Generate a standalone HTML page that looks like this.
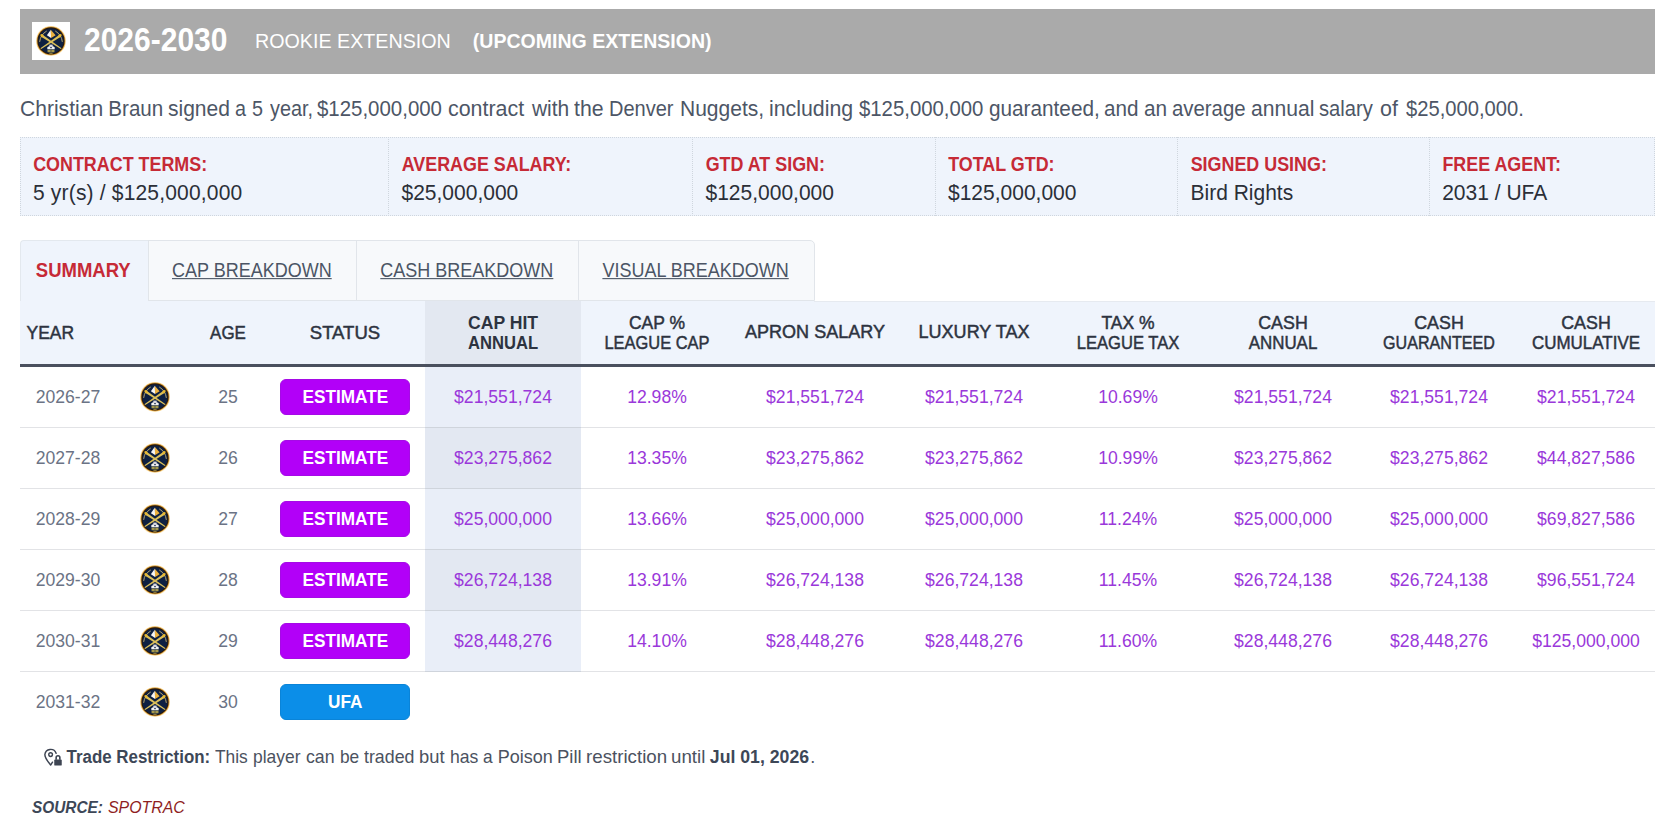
<!DOCTYPE html>
<html><head><meta charset="utf-8"><title>Contract</title>
<style>
*{box-sizing:border-box;margin:0;padding:0}
html,body{width:1663px;height:830px;overflow:hidden;background:#fff}
body{position:relative;font-family:"Liberation Sans", sans-serif}
.a{position:absolute;white-space:nowrap}
</style></head>
<body>
<div class="a" style="left:20px;top:9px;width:1635px;height:65px;background:#aaaaaa"></div>
<div class="a" style="left:32px;top:22px;width:38px;height:38px;background:#fff"></div>
<svg viewBox="0 0 40 40" width="40" height="40" style="position:absolute;left:31px;top:21px">
<circle cx="20" cy="19.9" r="15.0" fill="#f7cf70" opacity="0.45"/>
<circle cx="20" cy="19.9" r="14.4" fill="#e0a035"/>
<circle cx="20" cy="19.9" r="13.6" fill="#2a1a0e"/>
<circle cx="20" cy="19.9" r="12.5" fill="#0e2042"/>
<path d="M8.7 20.5 Q9.4 13.8 15.4 10.2 M31.3 20.5 Q30.6 13.8 24.6 10.2" stroke="#c9b472" stroke-width="0.9" fill="none" stroke-linecap="round"/>
<path d="M9.4 27.2 L10.2 28.0 L30.2 15.6 L28.8 13.6 Z" fill="#dcc05a"/>
<path d="M30.6 27.2 L29.8 28.0 L9.8 15.6 L11.2 13.6 Z" fill="#dcc05a"/>
<ellipse cx="11" cy="14.6" rx="1.8" ry="1.3" transform="rotate(33 11 14.6)" fill="#e8b830"/>
<ellipse cx="29" cy="14.6" rx="1.8" ry="1.3" transform="rotate(-33 29 14.6)" fill="#e8b830"/>
<path d="M19.8 8.7 L15.9 14.2 L20.1 17.1 Z" fill="#f6f6f6"/>
<path d="M19.8 8.7 L24.6 14.2 L20.1 17.1 Z" fill="#eab040"/>
<path d="M16.3 28.2 L16.3 26.2 L18 25.2 L22 25.2 L23.7 26.2 L23.7 28.2 Z" fill="#f2f2f2"/>
<rect x="18.3" y="23.6" width="3.4" height="2.2" fill="#d8d8e0"/>
<rect x="19.2" y="26.1" width="1.6" height="1.1" fill="#0e2042"/>
<rect x="16.6" y="28.8" width="6.8" height="2.4" fill="#d8c050"/>
<path d="M20 28.8 V31.2 M16.6 30 H23.4" stroke="#0e2042" stroke-width="0.5"/>
<rect x="18.4" y="31.8" width="3.2" height="0.9" fill="#b8a040"/>
</svg>
<div class="a" style="left:84.00px;top:22.81px;font-size:30px;line-height:36px;color:#fff;font-weight:700;font-style:normal;transform:scale(1.0,1.12);transform-origin:0 28.39px;">2026-2030</div>
<div class="a" style="left:255.00px;top:29.07px;font-size:19.7px;line-height:24px;color:#fff;font-weight:400;font-style:normal;transform:scale(1.0,1.07);transform-origin:0 18.83px;">ROOKIE EXTENSION</div>
<div class="a" style="left:472.80px;top:29.63px;font-size:19.55px;line-height:23px;color:#fff;font-weight:700;font-style:normal;transform:scale(1.0,1.05);transform-origin:0 18.27px;">(UPCOMING EXTENSION)</div>
<div class="a" style="left:20.28px;top:95.76px;font-size:20.6px;line-height:25px;color:#4d5666;font-weight:400;font-style:normal;transform:scale(1.0228,1.07);transform-origin:0 19.64px;">Christian</div>
<div class="a" style="left:108.30px;top:95.76px;font-size:20.6px;line-height:25px;color:#4d5666;font-weight:400;font-style:normal;transform:scale(1.0,1.07);transform-origin:0 19.64px;">Braun</div>
<div class="a" style="left:168.08px;top:95.76px;font-size:20.6px;line-height:25px;color:#4d5666;font-weight:400;font-style:normal;transform:scale(1.0203,1.07);transform-origin:0 19.64px;">signed</div>
<div class="a" style="left:234.86px;top:95.76px;font-size:20.6px;line-height:25px;color:#4d5666;font-weight:400;font-style:normal;transform:scale(0.96,1.07);transform-origin:0 19.64px;">a</div>
<div class="a" style="left:252.19px;top:95.76px;font-size:20.6px;line-height:25px;color:#4d5666;font-weight:400;font-style:normal;transform:scale(0.96,1.07);transform-origin:0 19.64px;">5</div>
<div class="a" style="left:269.70px;top:95.76px;font-size:20.6px;line-height:25px;color:#4d5666;font-weight:400;font-style:normal;transform:scale(0.9628,1.07);transform-origin:0 19.64px;">year,</div>
<div class="a" style="left:316.90px;top:95.76px;font-size:20.6px;line-height:25px;color:#4d5666;font-weight:400;font-style:normal;transform:scale(0.992,1.07);transform-origin:0 19.64px;">$125,000,000</div>
<div class="a" style="left:448.42px;top:95.76px;font-size:20.6px;line-height:25px;color:#4d5666;font-weight:400;font-style:normal;transform:scale(1.04,1.07);transform-origin:0 19.64px;">contract</div>
<div class="a" style="left:531.90px;top:95.76px;font-size:20.6px;line-height:25px;color:#4d5666;font-weight:400;font-style:normal;transform:scale(1.0167,1.07);transform-origin:0 19.64px;">with</div>
<div class="a" style="left:574.30px;top:95.76px;font-size:20.6px;line-height:25px;color:#4d5666;font-weight:400;font-style:normal;transform:scale(1.0321,1.07);transform-origin:0 19.64px;">the</div>
<div class="a" style="left:609.46px;top:95.76px;font-size:20.6px;line-height:25px;color:#4d5666;font-weight:400;font-style:normal;transform:scale(0.9719,1.07);transform-origin:0 19.64px;">Denver</div>
<div class="a" style="left:679.66px;top:95.76px;font-size:20.6px;line-height:25px;color:#4d5666;font-weight:400;font-style:normal;transform:scale(1.0203,1.07);transform-origin:0 19.64px;">Nuggets,</div>
<div class="a" style="left:768.56px;top:95.76px;font-size:20.6px;line-height:25px;color:#4d5666;font-weight:400;font-style:normal;transform:scale(1.0354,1.07);transform-origin:0 19.64px;">including</div>
<div class="a" style="left:859.10px;top:95.76px;font-size:20.6px;line-height:25px;color:#4d5666;font-weight:400;font-style:normal;transform:scale(0.9872,1.07);transform-origin:0 19.64px;">$125,000,000</div>
<div class="a" style="left:989.19px;top:95.76px;font-size:20.6px;line-height:25px;color:#4d5666;font-weight:400;font-style:normal;transform:scale(1.0075,1.07);transform-origin:0 19.64px;">guaranteed,</div>
<div class="a" style="left:1104.00px;top:95.76px;font-size:20.6px;line-height:25px;color:#4d5666;font-weight:400;font-style:normal;transform:scale(1.0031,1.07);transform-origin:0 19.64px;">and</div>
<div class="a" style="left:1143.79px;top:95.76px;font-size:20.6px;line-height:25px;color:#4d5666;font-weight:400;font-style:normal;transform:scale(1.0095,1.07);transform-origin:0 19.64px;">an</div>
<div class="a" style="left:1171.71px;top:95.76px;font-size:20.6px;line-height:25px;color:#4d5666;font-weight:400;font-style:normal;transform:scale(0.989,1.07);transform-origin:0 19.64px;">average</div>
<div class="a" style="left:1250.57px;top:95.76px;font-size:20.6px;line-height:25px;color:#4d5666;font-weight:400;font-style:normal;transform:scale(1.0267,1.07);transform-origin:0 19.64px;">annual</div>
<div class="a" style="left:1319.02px;top:95.76px;font-size:20.6px;line-height:25px;color:#4d5666;font-weight:400;font-style:normal;transform:scale(0.9796,1.07);transform-origin:0 19.64px;">salary</div>
<div class="a" style="left:1380.34px;top:95.76px;font-size:20.6px;line-height:25px;color:#4d5666;font-weight:400;font-style:normal;transform:scale(1.04,1.07);transform-origin:0 19.64px;">of</div>
<div class="a" style="left:1405.70px;top:95.76px;font-size:20.6px;line-height:25px;color:#4d5666;font-weight:400;font-style:normal;transform:scale(0.9798,1.07);transform-origin:0 19.64px;">$25,000,000.</div>
<div class="a" style="left:20px;top:137px;width:1635px;height:79px;background:#eff4fc;border:1px dotted #cfd6de"></div>
<div class="a" style="left:33.20px;top:154.50px;font-size:17.9px;line-height:21px;color:#c62a36;font-weight:700;font-style:normal;transform:scale(1.0,1.08);transform-origin:0 16.70px;">CONTRACT TERMS:</div>
<div class="a" style="left:33.00px;top:180.02px;font-size:21px;line-height:25px;color:#2b2f38;font-weight:400;font-style:normal;transform:scale(1.0,1.07);transform-origin:0 19.78px;letter-spacing:0.18px;">5 yr(s) / $125,000,000</div>
<div class="a" style="left:388.0px;top:137px;width:1px;height:79px;border-left:1px dotted #cfd6de"></div>
<div class="a" style="left:401.70px;top:154.50px;font-size:17.9px;line-height:21px;color:#c62a36;font-weight:700;font-style:normal;transform:scale(1.0,1.08);transform-origin:0 16.70px;">AVERAGE SALARY:</div>
<div class="a" style="left:401.50px;top:180.02px;font-size:21px;line-height:25px;color:#2b2f38;font-weight:400;font-style:normal;transform:scale(1.0,1.07);transform-origin:0 19.78px;">$25,000,000</div>
<div class="a" style="left:692.0px;top:137px;width:1px;height:79px;border-left:1px dotted #cfd6de"></div>
<div class="a" style="left:705.70px;top:154.50px;font-size:17.9px;line-height:21px;color:#c62a36;font-weight:700;font-style:normal;transform:scale(1.0,1.08);transform-origin:0 16.70px;">GTD AT SIGN:</div>
<div class="a" style="left:705.50px;top:180.02px;font-size:21px;line-height:25px;color:#2b2f38;font-weight:400;font-style:normal;transform:scale(1.0,1.07);transform-origin:0 19.78px;">$125,000,000</div>
<div class="a" style="left:934.5px;top:137px;width:1px;height:79px;border-left:1px dotted #cfd6de"></div>
<div class="a" style="left:948.20px;top:154.50px;font-size:17.9px;line-height:21px;color:#c62a36;font-weight:700;font-style:normal;transform:scale(1.0,1.08);transform-origin:0 16.70px;">TOTAL GTD:</div>
<div class="a" style="left:948.00px;top:180.02px;font-size:21px;line-height:25px;color:#2b2f38;font-weight:400;font-style:normal;transform:scale(1.0,1.07);transform-origin:0 19.78px;">$125,000,000</div>
<div class="a" style="left:1177.0px;top:137px;width:1px;height:79px;border-left:1px dotted #cfd6de"></div>
<div class="a" style="left:1190.70px;top:154.50px;font-size:17.9px;line-height:21px;color:#c62a36;font-weight:700;font-style:normal;transform:scale(1.0,1.08);transform-origin:0 16.70px;">SIGNED USING:</div>
<div class="a" style="left:1190.50px;top:180.02px;font-size:21px;line-height:25px;color:#2b2f38;font-weight:400;font-style:normal;transform:scale(1.0,1.07);transform-origin:0 19.78px;">Bird Rights</div>
<div class="a" style="left:1428.7px;top:137px;width:1px;height:79px;border-left:1px dotted #cfd6de"></div>
<div class="a" style="left:1442.40px;top:154.50px;font-size:17.9px;line-height:21px;color:#c62a36;font-weight:700;font-style:normal;transform:scale(1.0,1.08);transform-origin:0 16.70px;">FREE AGENT:</div>
<div class="a" style="left:1442.20px;top:180.02px;font-size:21px;line-height:25px;color:#2b2f38;font-weight:400;font-style:normal;transform:scale(1.0,1.07);transform-origin:0 19.78px;">2031 / UFA</div>
<div class="a" style="left:20px;top:240px;width:128px;height:62px;background:#eff4fc;border-top:1px solid #e3e8ee;border-left:1px solid #e3e8ee;border-top-left-radius:4px"></div>
<div class="a" style="left:147.5px;top:240px;width:209.3px;height:61px;background:#f7f9fb;border:1px solid #e1e5ea;"></div>
<div class="a" style="left:172.00px;top:259.56px;font-size:18px;line-height:22px;color:#4b5565;font-weight:400;font-style:normal;transform:scale(1.0,1.1);transform-origin:0 17.24px;text-decoration:underline;text-underline-offset:1px;text-decoration-thickness:1px">CAP BREAKDOWN</div>
<div class="a" style="left:355.8px;top:240px;width:223.1px;height:61px;background:#f7f9fb;border:1px solid #e1e5ea;"></div>
<div class="a" style="left:380.30px;top:259.56px;font-size:18px;line-height:22px;color:#4b5565;font-weight:400;font-style:normal;transform:scale(1.0,1.1);transform-origin:0 17.24px;text-decoration:underline;text-underline-offset:1px;text-decoration-thickness:1px">CASH BREAKDOWN</div>
<div class="a" style="left:577.9px;top:240px;width:237.4px;height:61px;background:#f7f9fb;border:1px solid #e1e5ea;border-top-right-radius:5px;"></div>
<div class="a" style="left:602.40px;top:259.56px;font-size:18px;line-height:22px;color:#4b5565;font-weight:400;font-style:normal;transform:scale(1.0,1.1);transform-origin:0 17.24px;text-decoration:underline;text-underline-offset:1px;text-decoration-thickness:1px">VISUAL BREAKDOWN</div>
<div class="a" style="left:35.80px;top:259.59px;font-size:18.5px;line-height:22px;color:#c62a36;font-weight:700;font-style:normal;transform:scale(1.0,1.05);transform-origin:0 17.41px;">SUMMARY</div>
<div class="a" style="left:20px;top:301px;width:1635px;height:63px;background:#eff4fc"></div>
<div class="a" style="left:814px;top:301px;width:841px;height:1px;background:#e6eaf0"></div>
<div class="a" style="left:425px;top:301px;width:156px;height:63px;background:#e3e8f1"></div>
<div class="a" style="left:20px;top:364px;width:1635px;height:3px;background:#4a505e"></div>
<div class="a" style="left:26.50px;top:322.64px;font-size:17.5px;line-height:21px;color:#2d3340;font-weight:400;font-style:normal;transform:scale(1.0,1.05);transform-origin:0 16.56px;-webkit-text-stroke:0.45px #2d3340">YEAR</div>
<div class="a" style="left:178.00px;top:322.64px;width:100px;text-align:center;font-size:17.5px;line-height:21px;color:#2d3340;font-weight:400;font-style:normal;transform:scale(0.97,1.05);transform-origin:50% 16.56px;-webkit-text-stroke:0.45px #2d3340">AGE</div>
<div class="a" style="left:275.40px;top:322.64px;width:140px;text-align:center;font-size:17.5px;line-height:21px;color:#2d3340;font-weight:400;font-style:normal;transform:scale(1.06,1.05);transform-origin:50% 16.56px;-webkit-text-stroke:0.45px #2d3340">STATUS</div>
<div class="a" style="left:418.00px;top:314.05px;width:170px;text-align:center;font-size:16.6px;line-height:20px;color:#2d3340;font-weight:700;font-style:normal;transform:scale(1.06,1.1);transform-origin:50% 15.75px;">CAP HIT</div>
<div class="a" style="left:418.00px;top:333.95px;width:170px;text-align:center;font-size:16.6px;line-height:20px;color:#2d3340;font-weight:700;font-style:normal;transform:scale(1.0,1.1);transform-origin:50% 15.75px;">ANNUAL</div>
<div class="a" style="left:572.00px;top:313.24px;width:170px;text-align:center;font-size:17.5px;line-height:21px;color:#2d3340;font-weight:400;font-style:normal;transform:scale(1.0,1.05);transform-origin:50% 16.56px;-webkit-text-stroke:0.45px #2d3340">CAP %</div>
<div class="a" style="left:572.00px;top:333.14px;width:170px;text-align:center;font-size:17.5px;line-height:21px;color:#2d3340;font-weight:400;font-style:normal;transform:scale(0.94,1.05);transform-origin:50% 16.56px;-webkit-text-stroke:0.45px #2d3340">LEAGUE CAP</div>
<div class="a" style="left:730.00px;top:322.34px;width:170px;text-align:center;font-size:17.5px;line-height:21px;color:#2d3340;font-weight:400;font-style:normal;transform:scale(1.03,1.05);transform-origin:50% 16.56px;-webkit-text-stroke:0.45px #2d3340">APRON SALARY</div>
<div class="a" style="left:889.00px;top:322.34px;width:170px;text-align:center;font-size:17.5px;line-height:21px;color:#2d3340;font-weight:400;font-style:normal;transform:scale(1.03,1.05);transform-origin:50% 16.56px;-webkit-text-stroke:0.45px #2d3340">LUXURY TAX</div>
<div class="a" style="left:1043.00px;top:313.24px;width:170px;text-align:center;font-size:17.5px;line-height:21px;color:#2d3340;font-weight:400;font-style:normal;transform:scale(1.0,1.05);transform-origin:50% 16.56px;-webkit-text-stroke:0.45px #2d3340">TAX %</div>
<div class="a" style="left:1043.00px;top:333.14px;width:170px;text-align:center;font-size:17.5px;line-height:21px;color:#2d3340;font-weight:400;font-style:normal;transform:scale(0.947,1.05);transform-origin:50% 16.56px;-webkit-text-stroke:0.45px #2d3340">LEAGUE TAX</div>
<div class="a" style="left:1198.00px;top:313.24px;width:170px;text-align:center;font-size:17.5px;line-height:21px;color:#2d3340;font-weight:400;font-style:normal;transform:scale(1.02,1.05);transform-origin:50% 16.56px;-webkit-text-stroke:0.45px #2d3340">CASH</div>
<div class="a" style="left:1198.00px;top:333.14px;width:170px;text-align:center;font-size:17.5px;line-height:21px;color:#2d3340;font-weight:400;font-style:normal;transform:scale(0.967,1.05);transform-origin:50% 16.56px;-webkit-text-stroke:0.45px #2d3340">ANNUAL</div>
<div class="a" style="left:1354.00px;top:313.24px;width:170px;text-align:center;font-size:17.5px;line-height:21px;color:#2d3340;font-weight:400;font-style:normal;transform:scale(1.02,1.05);transform-origin:50% 16.56px;-webkit-text-stroke:0.45px #2d3340">CASH</div>
<div class="a" style="left:1354.00px;top:333.14px;width:170px;text-align:center;font-size:17.5px;line-height:21px;color:#2d3340;font-weight:400;font-style:normal;transform:scale(0.92,1.05);transform-origin:50% 16.56px;-webkit-text-stroke:0.45px #2d3340">GUARANTEED</div>
<div class="a" style="left:1501.00px;top:313.24px;width:170px;text-align:center;font-size:17.5px;line-height:21px;color:#2d3340;font-weight:400;font-style:normal;transform:scale(1.02,1.05);transform-origin:50% 16.56px;-webkit-text-stroke:0.45px #2d3340">CASH</div>
<div class="a" style="left:1501.00px;top:333.14px;width:170px;text-align:center;font-size:17.5px;line-height:21px;color:#2d3340;font-weight:400;font-style:normal;transform:scale(0.97,1.05);transform-origin:50% 16.56px;-webkit-text-stroke:0.45px #2d3340">CUMULATIVE</div>
<div class="a" style="left:425px;top:367px;width:156px;height:61px;background:#e9eef8"></div>
<div class="a" style="left:425px;top:428px;width:156px;height:61px;background:#e3e8f2"></div>
<div class="a" style="left:425px;top:489px;width:156px;height:61px;background:#e9eef8"></div>
<div class="a" style="left:425px;top:550px;width:156px;height:61px;background:#e3e8f2"></div>
<div class="a" style="left:425px;top:611px;width:156px;height:61px;background:#e9eef8"></div>
<div class="a" style="left:20px;top:427px;width:1635px;height:1px;background:#e2e3e6"></div>
<div class="a" style="left:425px;top:427px;width:156px;height:1px;background:#cfd4dc"></div>
<div class="a" style="left:18.00px;top:387.40px;width:100px;text-align:center;font-size:17.6px;line-height:21px;color:#6b7385;font-weight:400;font-style:normal;">2026-27</div>
<svg viewBox="0 0 40 40" width="40" height="40" style="position:absolute;left:135px;top:377px">
<circle cx="20" cy="19.9" r="15.0" fill="#f7cf70" opacity="0.45"/>
<circle cx="20" cy="19.9" r="14.4" fill="#e0a035"/>
<circle cx="20" cy="19.9" r="13.6" fill="#2a1a0e"/>
<circle cx="20" cy="19.9" r="12.5" fill="#0e2042"/>
<path d="M8.7 20.5 Q9.4 13.8 15.4 10.2 M31.3 20.5 Q30.6 13.8 24.6 10.2" stroke="#c9b472" stroke-width="0.9" fill="none" stroke-linecap="round"/>
<path d="M9.4 27.2 L10.2 28.0 L30.2 15.6 L28.8 13.6 Z" fill="#dcc05a"/>
<path d="M30.6 27.2 L29.8 28.0 L9.8 15.6 L11.2 13.6 Z" fill="#dcc05a"/>
<ellipse cx="11" cy="14.6" rx="1.8" ry="1.3" transform="rotate(33 11 14.6)" fill="#e8b830"/>
<ellipse cx="29" cy="14.6" rx="1.8" ry="1.3" transform="rotate(-33 29 14.6)" fill="#e8b830"/>
<path d="M19.8 8.7 L15.9 14.2 L20.1 17.1 Z" fill="#f6f6f6"/>
<path d="M19.8 8.7 L24.6 14.2 L20.1 17.1 Z" fill="#eab040"/>
<path d="M16.3 28.2 L16.3 26.2 L18 25.2 L22 25.2 L23.7 26.2 L23.7 28.2 Z" fill="#f2f2f2"/>
<rect x="18.3" y="23.6" width="3.4" height="2.2" fill="#d8d8e0"/>
<rect x="19.2" y="26.1" width="1.6" height="1.1" fill="#0e2042"/>
<rect x="16.6" y="28.8" width="6.8" height="2.4" fill="#d8c050"/>
<path d="M20 28.8 V31.2 M16.6 30 H23.4" stroke="#0e2042" stroke-width="0.5"/>
<rect x="18.4" y="31.8" width="3.2" height="0.9" fill="#b8a040"/>
</svg>
<div class="a" style="left:198.00px;top:387.40px;width:60px;text-align:center;font-size:17.6px;line-height:21px;color:#6b7385;font-weight:400;font-style:normal;">25</div>
<div class="a" style="left:280px;top:379px;width:130px;height:36px;background:#b200f8;border:1px solid #a50ae6;border-radius:6px"></div>
<div class="a" style="left:280.30px;top:387.14px;width:130px;text-align:center;font-size:17.2px;line-height:21px;color:#fff;font-weight:700;font-style:normal;transform:scale(1.0,1.1);transform-origin:50% 16.46px;">ESTIMATE</div>
<div class="a" style="left:428.00px;top:387.40px;width:150px;text-align:center;font-size:17.6px;line-height:21px;color:#9a38da;font-weight:400;font-style:normal;">$21,551,724</div>
<div class="a" style="left:582.00px;top:387.40px;width:150px;text-align:center;font-size:17.6px;line-height:21px;color:#9a38da;font-weight:400;font-style:normal;">12.98%</div>
<div class="a" style="left:740.00px;top:387.40px;width:150px;text-align:center;font-size:17.6px;line-height:21px;color:#9a38da;font-weight:400;font-style:normal;">$21,551,724</div>
<div class="a" style="left:899.00px;top:387.40px;width:150px;text-align:center;font-size:17.6px;line-height:21px;color:#9a38da;font-weight:400;font-style:normal;">$21,551,724</div>
<div class="a" style="left:1053.00px;top:387.40px;width:150px;text-align:center;font-size:17.6px;line-height:21px;color:#9a38da;font-weight:400;font-style:normal;">10.69%</div>
<div class="a" style="left:1208.00px;top:387.40px;width:150px;text-align:center;font-size:17.6px;line-height:21px;color:#9a38da;font-weight:400;font-style:normal;">$21,551,724</div>
<div class="a" style="left:1364.00px;top:387.40px;width:150px;text-align:center;font-size:17.6px;line-height:21px;color:#9a38da;font-weight:400;font-style:normal;">$21,551,724</div>
<div class="a" style="left:1511.00px;top:387.40px;width:150px;text-align:center;font-size:17.6px;line-height:21px;color:#9a38da;font-weight:400;font-style:normal;">$21,551,724</div>
<div class="a" style="left:20px;top:488px;width:1635px;height:1px;background:#e2e3e6"></div>
<div class="a" style="left:425px;top:488px;width:156px;height:1px;background:#cfd4dc"></div>
<div class="a" style="left:18.00px;top:448.40px;width:100px;text-align:center;font-size:17.6px;line-height:21px;color:#6b7385;font-weight:400;font-style:normal;">2027-28</div>
<svg viewBox="0 0 40 40" width="40" height="40" style="position:absolute;left:135px;top:438px">
<circle cx="20" cy="19.9" r="15.0" fill="#f7cf70" opacity="0.45"/>
<circle cx="20" cy="19.9" r="14.4" fill="#e0a035"/>
<circle cx="20" cy="19.9" r="13.6" fill="#2a1a0e"/>
<circle cx="20" cy="19.9" r="12.5" fill="#0e2042"/>
<path d="M8.7 20.5 Q9.4 13.8 15.4 10.2 M31.3 20.5 Q30.6 13.8 24.6 10.2" stroke="#c9b472" stroke-width="0.9" fill="none" stroke-linecap="round"/>
<path d="M9.4 27.2 L10.2 28.0 L30.2 15.6 L28.8 13.6 Z" fill="#dcc05a"/>
<path d="M30.6 27.2 L29.8 28.0 L9.8 15.6 L11.2 13.6 Z" fill="#dcc05a"/>
<ellipse cx="11" cy="14.6" rx="1.8" ry="1.3" transform="rotate(33 11 14.6)" fill="#e8b830"/>
<ellipse cx="29" cy="14.6" rx="1.8" ry="1.3" transform="rotate(-33 29 14.6)" fill="#e8b830"/>
<path d="M19.8 8.7 L15.9 14.2 L20.1 17.1 Z" fill="#f6f6f6"/>
<path d="M19.8 8.7 L24.6 14.2 L20.1 17.1 Z" fill="#eab040"/>
<path d="M16.3 28.2 L16.3 26.2 L18 25.2 L22 25.2 L23.7 26.2 L23.7 28.2 Z" fill="#f2f2f2"/>
<rect x="18.3" y="23.6" width="3.4" height="2.2" fill="#d8d8e0"/>
<rect x="19.2" y="26.1" width="1.6" height="1.1" fill="#0e2042"/>
<rect x="16.6" y="28.8" width="6.8" height="2.4" fill="#d8c050"/>
<path d="M20 28.8 V31.2 M16.6 30 H23.4" stroke="#0e2042" stroke-width="0.5"/>
<rect x="18.4" y="31.8" width="3.2" height="0.9" fill="#b8a040"/>
</svg>
<div class="a" style="left:198.00px;top:448.40px;width:60px;text-align:center;font-size:17.6px;line-height:21px;color:#6b7385;font-weight:400;font-style:normal;">26</div>
<div class="a" style="left:280px;top:440px;width:130px;height:36px;background:#b200f8;border:1px solid #a50ae6;border-radius:6px"></div>
<div class="a" style="left:280.30px;top:448.14px;width:130px;text-align:center;font-size:17.2px;line-height:21px;color:#fff;font-weight:700;font-style:normal;transform:scale(1.0,1.1);transform-origin:50% 16.46px;">ESTIMATE</div>
<div class="a" style="left:428.00px;top:448.40px;width:150px;text-align:center;font-size:17.6px;line-height:21px;color:#9a38da;font-weight:400;font-style:normal;">$23,275,862</div>
<div class="a" style="left:582.00px;top:448.40px;width:150px;text-align:center;font-size:17.6px;line-height:21px;color:#9a38da;font-weight:400;font-style:normal;">13.35%</div>
<div class="a" style="left:740.00px;top:448.40px;width:150px;text-align:center;font-size:17.6px;line-height:21px;color:#9a38da;font-weight:400;font-style:normal;">$23,275,862</div>
<div class="a" style="left:899.00px;top:448.40px;width:150px;text-align:center;font-size:17.6px;line-height:21px;color:#9a38da;font-weight:400;font-style:normal;">$23,275,862</div>
<div class="a" style="left:1053.00px;top:448.40px;width:150px;text-align:center;font-size:17.6px;line-height:21px;color:#9a38da;font-weight:400;font-style:normal;">10.99%</div>
<div class="a" style="left:1208.00px;top:448.40px;width:150px;text-align:center;font-size:17.6px;line-height:21px;color:#9a38da;font-weight:400;font-style:normal;">$23,275,862</div>
<div class="a" style="left:1364.00px;top:448.40px;width:150px;text-align:center;font-size:17.6px;line-height:21px;color:#9a38da;font-weight:400;font-style:normal;">$23,275,862</div>
<div class="a" style="left:1511.00px;top:448.40px;width:150px;text-align:center;font-size:17.6px;line-height:21px;color:#9a38da;font-weight:400;font-style:normal;">$44,827,586</div>
<div class="a" style="left:20px;top:549px;width:1635px;height:1px;background:#e2e3e6"></div>
<div class="a" style="left:425px;top:549px;width:156px;height:1px;background:#cfd4dc"></div>
<div class="a" style="left:18.00px;top:509.40px;width:100px;text-align:center;font-size:17.6px;line-height:21px;color:#6b7385;font-weight:400;font-style:normal;">2028-29</div>
<svg viewBox="0 0 40 40" width="40" height="40" style="position:absolute;left:135px;top:499px">
<circle cx="20" cy="19.9" r="15.0" fill="#f7cf70" opacity="0.45"/>
<circle cx="20" cy="19.9" r="14.4" fill="#e0a035"/>
<circle cx="20" cy="19.9" r="13.6" fill="#2a1a0e"/>
<circle cx="20" cy="19.9" r="12.5" fill="#0e2042"/>
<path d="M8.7 20.5 Q9.4 13.8 15.4 10.2 M31.3 20.5 Q30.6 13.8 24.6 10.2" stroke="#c9b472" stroke-width="0.9" fill="none" stroke-linecap="round"/>
<path d="M9.4 27.2 L10.2 28.0 L30.2 15.6 L28.8 13.6 Z" fill="#dcc05a"/>
<path d="M30.6 27.2 L29.8 28.0 L9.8 15.6 L11.2 13.6 Z" fill="#dcc05a"/>
<ellipse cx="11" cy="14.6" rx="1.8" ry="1.3" transform="rotate(33 11 14.6)" fill="#e8b830"/>
<ellipse cx="29" cy="14.6" rx="1.8" ry="1.3" transform="rotate(-33 29 14.6)" fill="#e8b830"/>
<path d="M19.8 8.7 L15.9 14.2 L20.1 17.1 Z" fill="#f6f6f6"/>
<path d="M19.8 8.7 L24.6 14.2 L20.1 17.1 Z" fill="#eab040"/>
<path d="M16.3 28.2 L16.3 26.2 L18 25.2 L22 25.2 L23.7 26.2 L23.7 28.2 Z" fill="#f2f2f2"/>
<rect x="18.3" y="23.6" width="3.4" height="2.2" fill="#d8d8e0"/>
<rect x="19.2" y="26.1" width="1.6" height="1.1" fill="#0e2042"/>
<rect x="16.6" y="28.8" width="6.8" height="2.4" fill="#d8c050"/>
<path d="M20 28.8 V31.2 M16.6 30 H23.4" stroke="#0e2042" stroke-width="0.5"/>
<rect x="18.4" y="31.8" width="3.2" height="0.9" fill="#b8a040"/>
</svg>
<div class="a" style="left:198.00px;top:509.40px;width:60px;text-align:center;font-size:17.6px;line-height:21px;color:#6b7385;font-weight:400;font-style:normal;">27</div>
<div class="a" style="left:280px;top:501px;width:130px;height:36px;background:#b200f8;border:1px solid #a50ae6;border-radius:6px"></div>
<div class="a" style="left:280.30px;top:509.14px;width:130px;text-align:center;font-size:17.2px;line-height:21px;color:#fff;font-weight:700;font-style:normal;transform:scale(1.0,1.1);transform-origin:50% 16.46px;">ESTIMATE</div>
<div class="a" style="left:428.00px;top:509.40px;width:150px;text-align:center;font-size:17.6px;line-height:21px;color:#9a38da;font-weight:400;font-style:normal;">$25,000,000</div>
<div class="a" style="left:582.00px;top:509.40px;width:150px;text-align:center;font-size:17.6px;line-height:21px;color:#9a38da;font-weight:400;font-style:normal;">13.66%</div>
<div class="a" style="left:740.00px;top:509.40px;width:150px;text-align:center;font-size:17.6px;line-height:21px;color:#9a38da;font-weight:400;font-style:normal;">$25,000,000</div>
<div class="a" style="left:899.00px;top:509.40px;width:150px;text-align:center;font-size:17.6px;line-height:21px;color:#9a38da;font-weight:400;font-style:normal;">$25,000,000</div>
<div class="a" style="left:1053.00px;top:509.40px;width:150px;text-align:center;font-size:17.6px;line-height:21px;color:#9a38da;font-weight:400;font-style:normal;">11.24%</div>
<div class="a" style="left:1208.00px;top:509.40px;width:150px;text-align:center;font-size:17.6px;line-height:21px;color:#9a38da;font-weight:400;font-style:normal;">$25,000,000</div>
<div class="a" style="left:1364.00px;top:509.40px;width:150px;text-align:center;font-size:17.6px;line-height:21px;color:#9a38da;font-weight:400;font-style:normal;">$25,000,000</div>
<div class="a" style="left:1511.00px;top:509.40px;width:150px;text-align:center;font-size:17.6px;line-height:21px;color:#9a38da;font-weight:400;font-style:normal;">$69,827,586</div>
<div class="a" style="left:20px;top:610px;width:1635px;height:1px;background:#e2e3e6"></div>
<div class="a" style="left:425px;top:610px;width:156px;height:1px;background:#cfd4dc"></div>
<div class="a" style="left:18.00px;top:570.40px;width:100px;text-align:center;font-size:17.6px;line-height:21px;color:#6b7385;font-weight:400;font-style:normal;">2029-30</div>
<svg viewBox="0 0 40 40" width="40" height="40" style="position:absolute;left:135px;top:560px">
<circle cx="20" cy="19.9" r="15.0" fill="#f7cf70" opacity="0.45"/>
<circle cx="20" cy="19.9" r="14.4" fill="#e0a035"/>
<circle cx="20" cy="19.9" r="13.6" fill="#2a1a0e"/>
<circle cx="20" cy="19.9" r="12.5" fill="#0e2042"/>
<path d="M8.7 20.5 Q9.4 13.8 15.4 10.2 M31.3 20.5 Q30.6 13.8 24.6 10.2" stroke="#c9b472" stroke-width="0.9" fill="none" stroke-linecap="round"/>
<path d="M9.4 27.2 L10.2 28.0 L30.2 15.6 L28.8 13.6 Z" fill="#dcc05a"/>
<path d="M30.6 27.2 L29.8 28.0 L9.8 15.6 L11.2 13.6 Z" fill="#dcc05a"/>
<ellipse cx="11" cy="14.6" rx="1.8" ry="1.3" transform="rotate(33 11 14.6)" fill="#e8b830"/>
<ellipse cx="29" cy="14.6" rx="1.8" ry="1.3" transform="rotate(-33 29 14.6)" fill="#e8b830"/>
<path d="M19.8 8.7 L15.9 14.2 L20.1 17.1 Z" fill="#f6f6f6"/>
<path d="M19.8 8.7 L24.6 14.2 L20.1 17.1 Z" fill="#eab040"/>
<path d="M16.3 28.2 L16.3 26.2 L18 25.2 L22 25.2 L23.7 26.2 L23.7 28.2 Z" fill="#f2f2f2"/>
<rect x="18.3" y="23.6" width="3.4" height="2.2" fill="#d8d8e0"/>
<rect x="19.2" y="26.1" width="1.6" height="1.1" fill="#0e2042"/>
<rect x="16.6" y="28.8" width="6.8" height="2.4" fill="#d8c050"/>
<path d="M20 28.8 V31.2 M16.6 30 H23.4" stroke="#0e2042" stroke-width="0.5"/>
<rect x="18.4" y="31.8" width="3.2" height="0.9" fill="#b8a040"/>
</svg>
<div class="a" style="left:198.00px;top:570.40px;width:60px;text-align:center;font-size:17.6px;line-height:21px;color:#6b7385;font-weight:400;font-style:normal;">28</div>
<div class="a" style="left:280px;top:562px;width:130px;height:36px;background:#b200f8;border:1px solid #a50ae6;border-radius:6px"></div>
<div class="a" style="left:280.30px;top:570.14px;width:130px;text-align:center;font-size:17.2px;line-height:21px;color:#fff;font-weight:700;font-style:normal;transform:scale(1.0,1.1);transform-origin:50% 16.46px;">ESTIMATE</div>
<div class="a" style="left:428.00px;top:570.40px;width:150px;text-align:center;font-size:17.6px;line-height:21px;color:#9a38da;font-weight:400;font-style:normal;">$26,724,138</div>
<div class="a" style="left:582.00px;top:570.40px;width:150px;text-align:center;font-size:17.6px;line-height:21px;color:#9a38da;font-weight:400;font-style:normal;">13.91%</div>
<div class="a" style="left:740.00px;top:570.40px;width:150px;text-align:center;font-size:17.6px;line-height:21px;color:#9a38da;font-weight:400;font-style:normal;">$26,724,138</div>
<div class="a" style="left:899.00px;top:570.40px;width:150px;text-align:center;font-size:17.6px;line-height:21px;color:#9a38da;font-weight:400;font-style:normal;">$26,724,138</div>
<div class="a" style="left:1053.00px;top:570.40px;width:150px;text-align:center;font-size:17.6px;line-height:21px;color:#9a38da;font-weight:400;font-style:normal;">11.45%</div>
<div class="a" style="left:1208.00px;top:570.40px;width:150px;text-align:center;font-size:17.6px;line-height:21px;color:#9a38da;font-weight:400;font-style:normal;">$26,724,138</div>
<div class="a" style="left:1364.00px;top:570.40px;width:150px;text-align:center;font-size:17.6px;line-height:21px;color:#9a38da;font-weight:400;font-style:normal;">$26,724,138</div>
<div class="a" style="left:1511.00px;top:570.40px;width:150px;text-align:center;font-size:17.6px;line-height:21px;color:#9a38da;font-weight:400;font-style:normal;">$96,551,724</div>
<div class="a" style="left:20px;top:671px;width:1635px;height:1px;background:#e2e3e6"></div>
<div class="a" style="left:425px;top:671px;width:156px;height:1px;background:#cfd4dc"></div>
<div class="a" style="left:18.00px;top:631.40px;width:100px;text-align:center;font-size:17.6px;line-height:21px;color:#6b7385;font-weight:400;font-style:normal;">2030-31</div>
<svg viewBox="0 0 40 40" width="40" height="40" style="position:absolute;left:135px;top:621px">
<circle cx="20" cy="19.9" r="15.0" fill="#f7cf70" opacity="0.45"/>
<circle cx="20" cy="19.9" r="14.4" fill="#e0a035"/>
<circle cx="20" cy="19.9" r="13.6" fill="#2a1a0e"/>
<circle cx="20" cy="19.9" r="12.5" fill="#0e2042"/>
<path d="M8.7 20.5 Q9.4 13.8 15.4 10.2 M31.3 20.5 Q30.6 13.8 24.6 10.2" stroke="#c9b472" stroke-width="0.9" fill="none" stroke-linecap="round"/>
<path d="M9.4 27.2 L10.2 28.0 L30.2 15.6 L28.8 13.6 Z" fill="#dcc05a"/>
<path d="M30.6 27.2 L29.8 28.0 L9.8 15.6 L11.2 13.6 Z" fill="#dcc05a"/>
<ellipse cx="11" cy="14.6" rx="1.8" ry="1.3" transform="rotate(33 11 14.6)" fill="#e8b830"/>
<ellipse cx="29" cy="14.6" rx="1.8" ry="1.3" transform="rotate(-33 29 14.6)" fill="#e8b830"/>
<path d="M19.8 8.7 L15.9 14.2 L20.1 17.1 Z" fill="#f6f6f6"/>
<path d="M19.8 8.7 L24.6 14.2 L20.1 17.1 Z" fill="#eab040"/>
<path d="M16.3 28.2 L16.3 26.2 L18 25.2 L22 25.2 L23.7 26.2 L23.7 28.2 Z" fill="#f2f2f2"/>
<rect x="18.3" y="23.6" width="3.4" height="2.2" fill="#d8d8e0"/>
<rect x="19.2" y="26.1" width="1.6" height="1.1" fill="#0e2042"/>
<rect x="16.6" y="28.8" width="6.8" height="2.4" fill="#d8c050"/>
<path d="M20 28.8 V31.2 M16.6 30 H23.4" stroke="#0e2042" stroke-width="0.5"/>
<rect x="18.4" y="31.8" width="3.2" height="0.9" fill="#b8a040"/>
</svg>
<div class="a" style="left:198.00px;top:631.40px;width:60px;text-align:center;font-size:17.6px;line-height:21px;color:#6b7385;font-weight:400;font-style:normal;">29</div>
<div class="a" style="left:280px;top:623px;width:130px;height:36px;background:#b200f8;border:1px solid #a50ae6;border-radius:6px"></div>
<div class="a" style="left:280.30px;top:631.14px;width:130px;text-align:center;font-size:17.2px;line-height:21px;color:#fff;font-weight:700;font-style:normal;transform:scale(1.0,1.1);transform-origin:50% 16.46px;">ESTIMATE</div>
<div class="a" style="left:428.00px;top:631.40px;width:150px;text-align:center;font-size:17.6px;line-height:21px;color:#9a38da;font-weight:400;font-style:normal;">$28,448,276</div>
<div class="a" style="left:582.00px;top:631.40px;width:150px;text-align:center;font-size:17.6px;line-height:21px;color:#9a38da;font-weight:400;font-style:normal;">14.10%</div>
<div class="a" style="left:740.00px;top:631.40px;width:150px;text-align:center;font-size:17.6px;line-height:21px;color:#9a38da;font-weight:400;font-style:normal;">$28,448,276</div>
<div class="a" style="left:899.00px;top:631.40px;width:150px;text-align:center;font-size:17.6px;line-height:21px;color:#9a38da;font-weight:400;font-style:normal;">$28,448,276</div>
<div class="a" style="left:1053.00px;top:631.40px;width:150px;text-align:center;font-size:17.6px;line-height:21px;color:#9a38da;font-weight:400;font-style:normal;">11.60%</div>
<div class="a" style="left:1208.00px;top:631.40px;width:150px;text-align:center;font-size:17.6px;line-height:21px;color:#9a38da;font-weight:400;font-style:normal;">$28,448,276</div>
<div class="a" style="left:1364.00px;top:631.40px;width:150px;text-align:center;font-size:17.6px;line-height:21px;color:#9a38da;font-weight:400;font-style:normal;">$28,448,276</div>
<div class="a" style="left:1511.00px;top:631.40px;width:150px;text-align:center;font-size:17.6px;line-height:21px;color:#9a38da;font-weight:400;font-style:normal;">$125,000,000</div>
<div class="a" style="left:18.00px;top:692.40px;width:100px;text-align:center;font-size:17.6px;line-height:21px;color:#6b7385;font-weight:400;font-style:normal;">2031-32</div>
<svg viewBox="0 0 40 40" width="40" height="40" style="position:absolute;left:135px;top:682px">
<circle cx="20" cy="19.9" r="15.0" fill="#f7cf70" opacity="0.45"/>
<circle cx="20" cy="19.9" r="14.4" fill="#e0a035"/>
<circle cx="20" cy="19.9" r="13.6" fill="#2a1a0e"/>
<circle cx="20" cy="19.9" r="12.5" fill="#0e2042"/>
<path d="M8.7 20.5 Q9.4 13.8 15.4 10.2 M31.3 20.5 Q30.6 13.8 24.6 10.2" stroke="#c9b472" stroke-width="0.9" fill="none" stroke-linecap="round"/>
<path d="M9.4 27.2 L10.2 28.0 L30.2 15.6 L28.8 13.6 Z" fill="#dcc05a"/>
<path d="M30.6 27.2 L29.8 28.0 L9.8 15.6 L11.2 13.6 Z" fill="#dcc05a"/>
<ellipse cx="11" cy="14.6" rx="1.8" ry="1.3" transform="rotate(33 11 14.6)" fill="#e8b830"/>
<ellipse cx="29" cy="14.6" rx="1.8" ry="1.3" transform="rotate(-33 29 14.6)" fill="#e8b830"/>
<path d="M19.8 8.7 L15.9 14.2 L20.1 17.1 Z" fill="#f6f6f6"/>
<path d="M19.8 8.7 L24.6 14.2 L20.1 17.1 Z" fill="#eab040"/>
<path d="M16.3 28.2 L16.3 26.2 L18 25.2 L22 25.2 L23.7 26.2 L23.7 28.2 Z" fill="#f2f2f2"/>
<rect x="18.3" y="23.6" width="3.4" height="2.2" fill="#d8d8e0"/>
<rect x="19.2" y="26.1" width="1.6" height="1.1" fill="#0e2042"/>
<rect x="16.6" y="28.8" width="6.8" height="2.4" fill="#d8c050"/>
<path d="M20 28.8 V31.2 M16.6 30 H23.4" stroke="#0e2042" stroke-width="0.5"/>
<rect x="18.4" y="31.8" width="3.2" height="0.9" fill="#b8a040"/>
</svg>
<div class="a" style="left:198.00px;top:692.40px;width:60px;text-align:center;font-size:17.6px;line-height:21px;color:#6b7385;font-weight:400;font-style:normal;">30</div>
<div class="a" style="left:280px;top:684px;width:130px;height:36px;background:#0b8ee8;border:1px solid #0a84d8;border-radius:6px"></div>
<div class="a" style="left:280.30px;top:692.14px;width:130px;text-align:center;font-size:17.2px;line-height:21px;color:#fff;font-weight:700;font-style:normal;transform:scale(1.0,1.1);transform-origin:50% 16.46px;">UFA</div>
<svg class="a" style="left:42px;top:746px" width="22" height="22" viewBox="0 0 22 22">
<path d="M14.1 7.3 A5.8 5.8 0 0 0 2.85 8.5 C2.85 12.3 6 15.8 8.65 19 L10.5 16.2" fill="none" stroke="#3d4452" stroke-width="1.45" stroke-linecap="round" stroke-linejoin="round"/>
<circle cx="8.6" cy="8.6" r="1.85" fill="none" stroke="#3d4452" stroke-width="1.4"/>
<path d="M14.15 13.8 V11.6 A1.85 1.85 0 0 1 17.85 11.6 V13.8" fill="none" stroke="#3d4452" stroke-width="1.6"/>
<rect x="12.25" y="13.6" width="7.5" height="6.0" rx="0.9" fill="#3d4452"/>
</svg>
<div class="a" style="left:66.60px;top:747.74px;font-size:16.9px;line-height:20px;color:#3d4757;font-weight:700;font-style:normal;transform:scale(1.0,1.06);transform-origin:0 15.86px;">Trade Restriction:</div>
<div class="a" style="left:215.10px;top:746.36px;font-size:18px;line-height:22px;color:#4b5260;font-weight:400;font-style:normal;transform:scale(0.9647,1.03);transform-origin:0 17.24px;">This</div>
<div class="a" style="left:253.03px;top:746.36px;font-size:18px;line-height:22px;color:#4b5260;font-weight:400;font-style:normal;transform:scale(0.9688,1.03);transform-origin:0 17.24px;">player</div>
<div class="a" style="left:306.01px;top:746.36px;font-size:18px;line-height:22px;color:#4b5260;font-weight:400;font-style:normal;transform:scale(0.9852,1.03);transform-origin:0 17.24px;">can</div>
<div class="a" style="left:339.84px;top:746.36px;font-size:18px;line-height:22px;color:#4b5260;font-weight:400;font-style:normal;transform:scale(0.9611,1.03);transform-origin:0 17.24px;">be</div>
<div class="a" style="left:364.30px;top:746.36px;font-size:18px;line-height:22px;color:#4b5260;font-weight:400;font-style:normal;transform:scale(0.988,1.03);transform-origin:0 17.24px;">traded</div>
<div class="a" style="left:419.18px;top:746.36px;font-size:18px;line-height:22px;color:#4b5260;font-weight:400;font-style:normal;transform:scale(1.0208,1.03);transform-origin:0 17.24px;">but</div>
<div class="a" style="left:449.52px;top:746.36px;font-size:18px;line-height:22px;color:#4b5260;font-weight:400;font-style:normal;transform:scale(0.9786,1.03);transform-origin:0 17.24px;">has</div>
<div class="a" style="left:482.72px;top:746.36px;font-size:18px;line-height:22px;color:#4b5260;font-weight:400;font-style:normal;transform:scale(0.96,1.03);transform-origin:0 17.24px;">a</div>
<div class="a" style="left:497.80px;top:746.36px;font-size:18px;line-height:22px;color:#4b5260;font-weight:400;font-style:normal;transform:scale(1.0,1.03);transform-origin:0 17.24px;">Poison</div>
<div class="a" style="left:557.17px;top:746.36px;font-size:18px;line-height:22px;color:#4b5260;font-weight:400;font-style:normal;transform:scale(1.0273,1.03);transform-origin:0 17.24px;">Pill</div>
<div class="a" style="left:585.74px;top:746.36px;font-size:18px;line-height:22px;color:#4b5260;font-weight:400;font-style:normal;transform:scale(1.04,1.03);transform-origin:0 17.24px;">restriction</div>
<div class="a" style="left:671.44px;top:746.36px;font-size:18px;line-height:22px;color:#4b5260;font-weight:400;font-style:normal;transform:scale(1.04,1.03);transform-origin:0 17.24px;">until</div>
<div class="a" style="left:709.80px;top:746.97px;font-size:17.7px;line-height:21px;color:#3d4757;font-weight:700;font-style:normal;transform:scale(1.0,1.03);transform-origin:0 16.63px;">Jul 01, 2026</div>
<div class="a" style="left:810.20px;top:746.36px;font-size:18px;line-height:22px;color:#4b5260;font-weight:400;font-style:normal;">.</div>
<div class="a" style="left:32.00px;top:799.16px;font-size:15.4px;line-height:18px;color:#3d4757;font-weight:700;font-style:italic;transform:scale(1.0,1.1);transform-origin:0 14.34px;">SOURCE:</div>
<div class="a" style="left:108.00px;top:798.49px;font-size:15.9px;line-height:19px;color:#8f1f1f;font-weight:400;font-style:italic;transform:scale(1.0,1.08);transform-origin:0 15.01px;">SPOTRAC</div>
</body></html>
